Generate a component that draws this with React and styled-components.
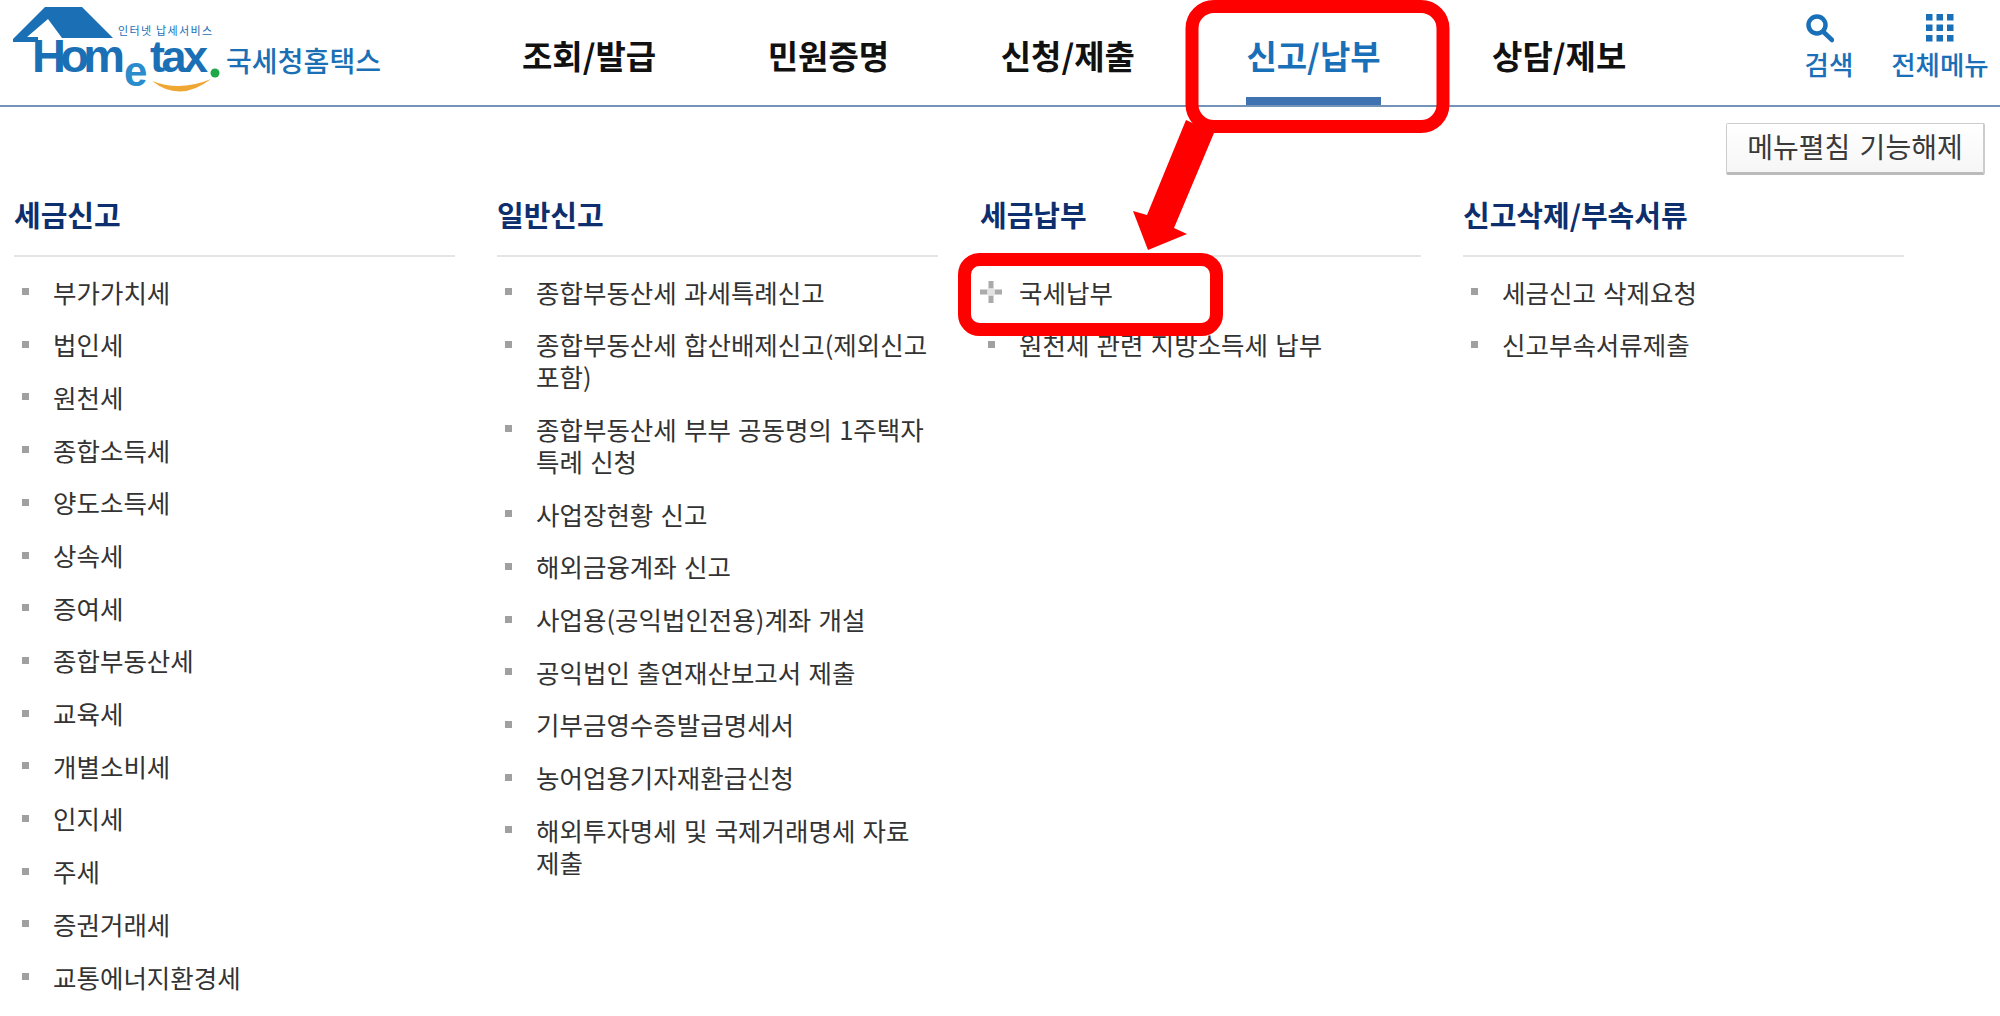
import React from "react";
import styled, { createGlobalStyle } from "styled-components";

const GlobalStyle = createGlobalStyle`
  html, body {
    margin: 0;
    padding: 0;
    background: #fff;
  }
  body {
    font-family: "Noto Sans CJK KR", "Noto Sans", sans-serif;
  }
`;

const Page = styled.div`
  position: relative;
  width: 2000px;
  height: 1016px;
  overflow: hidden;
  background: #fff;
`;

const Header = styled.header`
  display: flex;
  align-items: flex-start;
  height: 105px;
  border-bottom: 2px solid #7393b8;
`;

const LogoWrap = styled.a`
  display: flex;
  flex: none;
  width: 522px;
  height: 105px;
`;

const LogoName = styled.span`
  padding: 40px 0 0 5px;
  font-size: 28px;
  line-height: 40px;
  font-weight: 500;
  letter-spacing: 0.1px;
  color: #1a6fb5;
  white-space: nowrap;
`;

const Nav = styled.nav`
  display: flex;
  gap: 111.5px;
  flex: none;
  width: 1282px;
`;

const NavItem = styled.a`
  display: block;
  height: 105px;
  box-sizing: border-box;
  padding-top: 31px;
  font-size: 33px;
  line-height: 48px;
  font-weight: 700;
  white-space: nowrap;
  color: ${(p) => (p.$active ? "#1a70b8" : "#111")};
  border-bottom: 8px solid ${(p) => (p.$active ? "#3f72b0" : "transparent")};
`;

const Tools = styled.div`
  display: flex;
  gap: 37px;
`;

const Tool = styled.a`
  display: flex;
  flex-direction: column;
  align-items: center;
  padding-top: 13px;
  width: ${(p) => p.$width}px;
  font-size: 26.5px;
  line-height: 36px;
  font-weight: 500;
  color: #1a70b8;
  white-space: nowrap;

  svg {
    display: block;
    height: 33px;
  }
`;

const ActionRow = styled.div`
  display: flex;
  justify-content: flex-end;
  padding: 16px 15px 0 0;
`;

const ReleaseButton = styled.button`
  width: 259px;
  height: 52px;
  padding: 0 0 4px;
  background: linear-gradient(#fff, #f6f6f6);
  border: 1px solid #ccc;
  border-bottom: 3px solid #bbb;
  border-right: 2px solid #ccc;
  border-radius: 2px;
  font-family: inherit;
  font-size: 28px;
  word-spacing: 3px;
  color: #3a3a3a;
  white-space: nowrap;
`;

const Columns = styled.main`
  display: grid;
  grid-template-columns: repeat(4, 441px);
  column-gap: 42px;
  padding: 0 0 0 14px;
`;

const ColumnTitle = styled.h2`
  margin: 0;
  height: 82px;
  box-sizing: border-box;
  padding-top: 18px;
  font-size: 29px;
  line-height: 42px;
  font-weight: 700;
  color: #0d2f6e;
  border-bottom: 2px solid #e5e5e5;
`;

const MenuList = styled.ul`
  list-style: none;
  margin: 0;
  padding: 18.6px 0 0;
`;

const MenuRow = styled.li`
  display: flex;
  align-items: flex-start;
  margin-bottom: 20.7px;
  font-size: 25.5px;
  line-height: 32px;
  word-spacing: 1.5px;
  color: #333;
`;

const Marker = styled.span`
  display: flex;
  align-items: center;
  flex: none;
  width: 39px;
  height: 32px;
`;

const Square = styled.i`
  display: block;
  width: 7px;
  height: 7px;
  margin-left: 8px;
  background: #a0a0a0;
`;

const RowText = styled.span`
  display: block;
  max-width: 396px;
  word-break: keep-all;
`;

const Overlay = styled.svg`
  position: absolute;
  left: 0;
  top: 0;
  pointer-events: none;
`;

const columns = [
  {
    title: "세금신고",
    items: [
      "부가가치세",
      "법인세",
      "원천세",
      "종합소득세",
      "양도소득세",
      "상속세",
      "증여세",
      "종합부동산세",
      "교육세",
      "개별소비세",
      "인지세",
      "주세",
      "증권거래세",
      "교통에너지환경세",
    ],
  },
  {
    title: "일반신고",
    items: [
      "종합부동산세 과세특례신고",
      "종합부동산세 합산배제신고(제외신고 포함)",
      "종합부동산세 부부 공동명의 1주택자 특례 신청",
      "사업장현황 신고",
      "해외금융계좌 신고",
      "사업용(공익법인전용)계좌 개설",
      "공익법인 출연재산보고서 제출",
      "기부금영수증발급명세서",
      "농어업용기자재환급신청",
      "해외투자명세 및 국제거래명세 자료 제출",
    ],
  },
  {
    title: "세금납부",
    items: ["국세납부", "원천세 관련 지방소득세 납부"],
    hovered: 0,
  },
  {
    title: "신고삭제/부속서류",
    items: ["세금신고 삭제요청", "신고부속서류제출"],
  },
];

function HouseLogo() {
  return (
    <svg width="221" height="100" viewBox="0 0 221 100" style={{ display: "block", flex: "none" }}>
      <path
        d="M45 7 L82 7 L113 38 L62 38 L48 19 L27 37 L38 37 L38 42 L13 42 L13 39 Z"
        fill="#1a6fb5"
      />
      <text x="32" y="72" fontFamily="Liberation Sans" fontWeight="700" fontSize="47" fill="#1a6fb5" textLength="93">
        Hom
      </text>
      <text x="124" y="86" fontFamily="Liberation Sans" fontWeight="700" fontSize="42" fill="#2a8ccc">
        e
      </text>
      <text x="150" y="72" fontFamily="Liberation Sans" fontWeight="700" fontSize="45" fill="#1a6fb5" textLength="58">
        tax
      </text>
      <circle cx="215" cy="73" r="4.5" fill="#1fa84a" />
      <path d="M152 81 Q180 103 211 79 Q180 92 152 81 Z" fill="#f0a632" />
      <text x="118" y="35" fontFamily="Noto Sans CJK KR" fontSize="11" fill="#1a6fb5" textLength="94">
        인터넷 납세서비스
      </text>
    </svg>
  );
}

function SearchIcon() {
  return (
    <svg width="28" viewBox="0 0 28 33" style={{ marginRight: 18 }}>
      <circle cx="11" cy="12" r="8.5" fill="none" stroke="#1a70b8" strokeWidth="4.5" />
      <path d="M17 18.5 L26 27" stroke="#1a70b8" strokeWidth="4.5" strokeLinecap="round" />
    </svg>
  );
}

function GridIcon() {
  const cells = [];
  for (let r = 0; r < 3; r++) {
    for (let c = 0; c < 3; c++) {
      cells.push(
        <rect key={`${r}-${c}`} x={c * 10.5} y={1 + r * 10.5} width="6.5" height="6.5" fill="#1a70b8" />
      );
    }
  }
  return (
    <svg width="28" viewBox="0 0 28 33">
      {cells}
    </svg>
  );
}

function PlusIcon() {
  return (
    <svg width="22" height="22" viewBox="0 0 22 22" style={{ flex: "none" }}>
      <rect x="8.5" y="0" width="5" height="7.5" fill="#aaa" />
      <rect x="8.5" y="14.5" width="5" height="7.5" fill="#aaa" />
      <rect x="0" y="8.5" width="7.5" height="5" fill="#aaa" />
      <rect x="14.5" y="8.5" width="7.5" height="5" fill="#aaa" />
      <rect x="7.5" y="7.5" width="7" height="7" fill="#e2e2e2" />
    </svg>
  );
}

function Annotations() {
  return (
    <Overlay width="2000" height="1016" viewBox="0 0 2000 1016">
      <rect x="1192" y="6.5" width="251" height="120" rx="22" fill="none" stroke="#f00" strokeWidth="13" />
      <rect x="964.5" y="259.5" width="252" height="70" rx="15" fill="none" stroke="#f00" strokeWidth="13" />
      <polygon
        points="1186,120 1214,133 1174,228 1187,234 1148,250 1133,211 1147,215"
        fill="#f00"
      />
    </Overlay>
  );
}

export default function App() {
  return (
    <>
      <GlobalStyle />
      <Page>
        <Header>
          <LogoWrap>
            <HouseLogo />
            <LogoName>국세청홈택스</LogoName>
          </LogoWrap>
          <Nav>
            <NavItem>조회/발급</NavItem>
            <NavItem>민원증명</NavItem>
            <NavItem>신청/제출</NavItem>
            <NavItem $active>신고/납부</NavItem>
            <NavItem>상담/제보</NavItem>
          </Nav>
          <Tools>
            <Tool $width={50}>
              <SearchIcon />
              검색
            </Tool>
            <Tool $width={98}>
              <GridIcon />
              전체메뉴
            </Tool>
          </Tools>
        </Header>
        <ActionRow>
          <ReleaseButton>메뉴펼침 기능해제</ReleaseButton>
        </ActionRow>
        <Columns>
          {columns.map((col) => (
            <section key={col.title}>
              <ColumnTitle>{col.title}</ColumnTitle>
              <MenuList>
                {col.items.map((item, i) => (
                  <MenuRow key={item}>
                    <Marker>{col.hovered === i ? <PlusIcon /> : <Square />}</Marker>
                    <RowText>{item}</RowText>
                  </MenuRow>
                ))}
              </MenuList>
            </section>
          ))}
        </Columns>
        <Annotations />
      </Page>
    </>
  );
}
